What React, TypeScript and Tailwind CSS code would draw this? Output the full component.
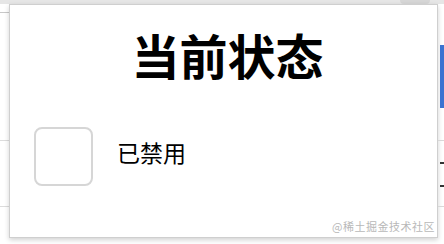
export default function App() {
  return (
    <div className="flex h-[244px] w-[444px] flex-col overflow-hidden bg-white font-['Noto_Sans_CJK_SC',sans-serif]">
      {/* Top bar of the page behind */}
      <div className="flex h-[4px] shrink-0 justify-end bg-[#e6e6e6] pr-[14px]">
        <div className="h-[4px] w-[30px] rounded-b-full bg-[#d6d6d6]" />
      </div>

      <div className="flex flex-1">
        {/* Left edge of the page */}
        <div className="flex w-[9px] shrink-0 flex-col pt-[8px]">
          <div className="h-[128px] border-t border-[#c8c8c8]" />
          <div className="h-[66px] border-t border-[#dcdcdc]" />
          <div className="border-t border-[#dcdcdc]" />
        </div>

        {/* Popup */}
        <div className="flex h-[234px] w-[429px] shrink-0 flex-col border border-[#cfcfcf] bg-white px-6 pt-[25px] shadow-[0_2px_5px_rgba(0,0,0,0.18)]">
          <h1 className="pl-[8px] text-center text-[48px] font-bold leading-none text-black">当前状态</h1>
          <div className="mt-[49px] flex items-center gap-6">
            <div className="h-[59px] w-[59px] rounded-[8px] border-2 border-[#d6d6d6] bg-white" />
            <span className="pb-[9px] text-[23px] leading-none text-black">已禁用</span>
          </div>
          <span className="-mr-[22px] mb-[5px] mt-auto self-end text-[11px] leading-none tracking-[0.5px] text-[#b8b8b8]">@稀土掘金技术社区</span>
        </div>

        {/* Right edge of the page */}
        <div className="flex flex-1 flex-col items-end pt-[41px]">
          <div className="h-[63px] w-[4px] bg-[#3b73d1]" />
          <div className="mt-[32px] w-[6px] border-t border-[#d8d8d8]" />
          <div className="mt-[21px] h-[2px] w-[4px] bg-[#333]" />
          <div className="mt-[21px] h-[2px] w-[4px] bg-[#333]" />
          <div className="mt-[19px] w-[6px] border-t border-[#d8d8d8]" />
        </div>
      </div>
    </div>
  );
}
